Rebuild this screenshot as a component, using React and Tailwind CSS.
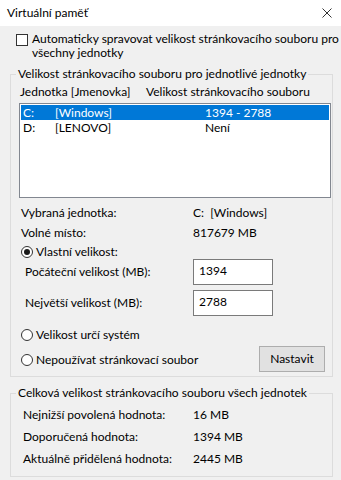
export default function App() {
  const Radio = ({ checked }) => (
    <span className="w-[12px] h-[12px] rounded-full border border-[#333333] bg-white flex items-center justify-center shrink-0">
      {checked ? <span className="w-[6px] h-[6px] rounded-full bg-[#1a1a1a]" /> : null}
    </span>
  );

  return (
    <div className="w-[341px] h-[480px] overflow-hidden bg-[#f0f0f0] text-[12px] leading-[14px] text-black font-['Lato',sans-serif]">
      <div className="h-[26px] bg-white flex items-center justify-between pl-[7px] pr-[9px]">
        <span>Virtuální paměť</span>
        <svg width="10" height="10" viewBox="0 0 10 10" className="text-[#333]">
          <path d="M0.5 0.5 L9.5 9.5 M9.5 0.5 L0.5 9.5" stroke="currentColor" strokeWidth="1" />
        </svg>
      </div>

      <div className="mt-[6px] pl-[16px] flex items-start gap-[4px]">
        <span className="mt-[2px] w-[12px] h-[12px] border border-[#333333] bg-white shrink-0" />
        <span className="whitespace-nowrap">
          Automaticky spravovat velikost stránkovacího souboru pro
          <br />
          všechny jednotky
        </span>
      </div>

      <fieldset className="mt-[7px] ml-[10px] w-[323px] border border-[#dcdcdc] pb-[4px]">
        <legend className="ml-[5px] px-[2px]">Velikost stránkovacího souboru pro jednotlivé jednotky</legend>
        <div className="mt-[4px] pl-[9px] flex">
          <span className="w-[126px]">Jednotka [Jmenovka]</span>
          <span>Velikost stránkovacího souboru</span>
        </div>
        <div className="mt-[4px] ml-[8px] w-[312px] h-[95px] border border-[#828790] bg-white p-[1px]">
          <div className="h-[15px] flex items-center bg-[#0078d7] text-white pl-[2px]">
            <span className="w-[32px]">C:</span>
            <span className="w-[150px]">[Windows]</span>
            <span>1394 - 2788</span>
          </div>
          <div className="h-[15px] flex items-center pl-[2px]">
            <span className="w-[32px]">D:</span>
            <span className="w-[150px]">[LENOVO]</span>
            <span>Není</span>
          </div>
        </div>

        <div className="mt-[4px] h-[21px] pl-[10px] flex items-center">
          <span className="w-[172px]">Vybraná jednotka:</span>
          <span>C:&nbsp; [Windows]</span>
        </div>
        <div className="h-[20px] pl-[10px] flex items-center">
          <span className="w-[172px]">Volné místo:</span>
          <span>817679 MB</span>
        </div>
        <div className="mt-[1px] h-[15px] pl-[10px] flex items-center gap-[3px]">
          <Radio checked />
          <span>Vlastní velikost:</span>
        </div>
        <div className="h-[26px] pl-[14px] flex items-center">
          <span className="w-[168px]">Počáteční velikost (MB):</span>
          <div className="w-[80px] h-[26px] border border-[#7a7a7a] bg-white pl-[5px] pt-[4px]">1394</div>
        </div>
        <div className="mt-[5px] h-[26px] pl-[14px] flex items-center">
          <span className="w-[168px]">Největší velikost (MB):</span>
          <div className="w-[80px] h-[26px] border border-[#7a7a7a] bg-white pl-[5px] pt-[4px]">2788</div>
        </div>
        <div className="mt-[11px] h-[16px] pl-[10px] flex items-center gap-[3px]">
          <Radio />
          <span>Velikost určí systém</span>
        </div>
        <div className="mt-[3px] h-[26px] pl-[10px] pr-[7px] flex items-center justify-between">
          <div className="flex items-center gap-[3px] mt-[2px]">
            <Radio />
            <span>Nepoužívat stránkovací soubor</span>
          </div>
          <button className="w-[66px] h-[26px] bg-[#e1e1e1] border border-[#adadad] flex items-center justify-center">
            Nastavit
          </button>
        </div>
      </fieldset>

      <fieldset className="mt-[9px] ml-[10px] w-[323px] border border-[#dcdcdc] pb-[6px]">
        <legend className="ml-[5px] px-[2px]">Celková velikost stránkovacího souboru všech jednotek</legend>
        <div className="mt-[4px] h-[22px] pl-[12px] flex items-center">
          <span className="w-[170px]">Nejnižší povolená hodnota:</span>
          <span>16 MB</span>
        </div>
        <div className="h-[22px] pl-[12px] flex items-center">
          <span className="w-[170px]">Doporučená hodnota:</span>
          <span>1394 MB</span>
        </div>
        <div className="h-[22px] pl-[12px] flex items-center">
          <span className="w-[170px]">Aktuálně přidělená hodnota:</span>
          <span>2445 MB</span>
        </div>
      </fieldset>
    </div>
  );
}
